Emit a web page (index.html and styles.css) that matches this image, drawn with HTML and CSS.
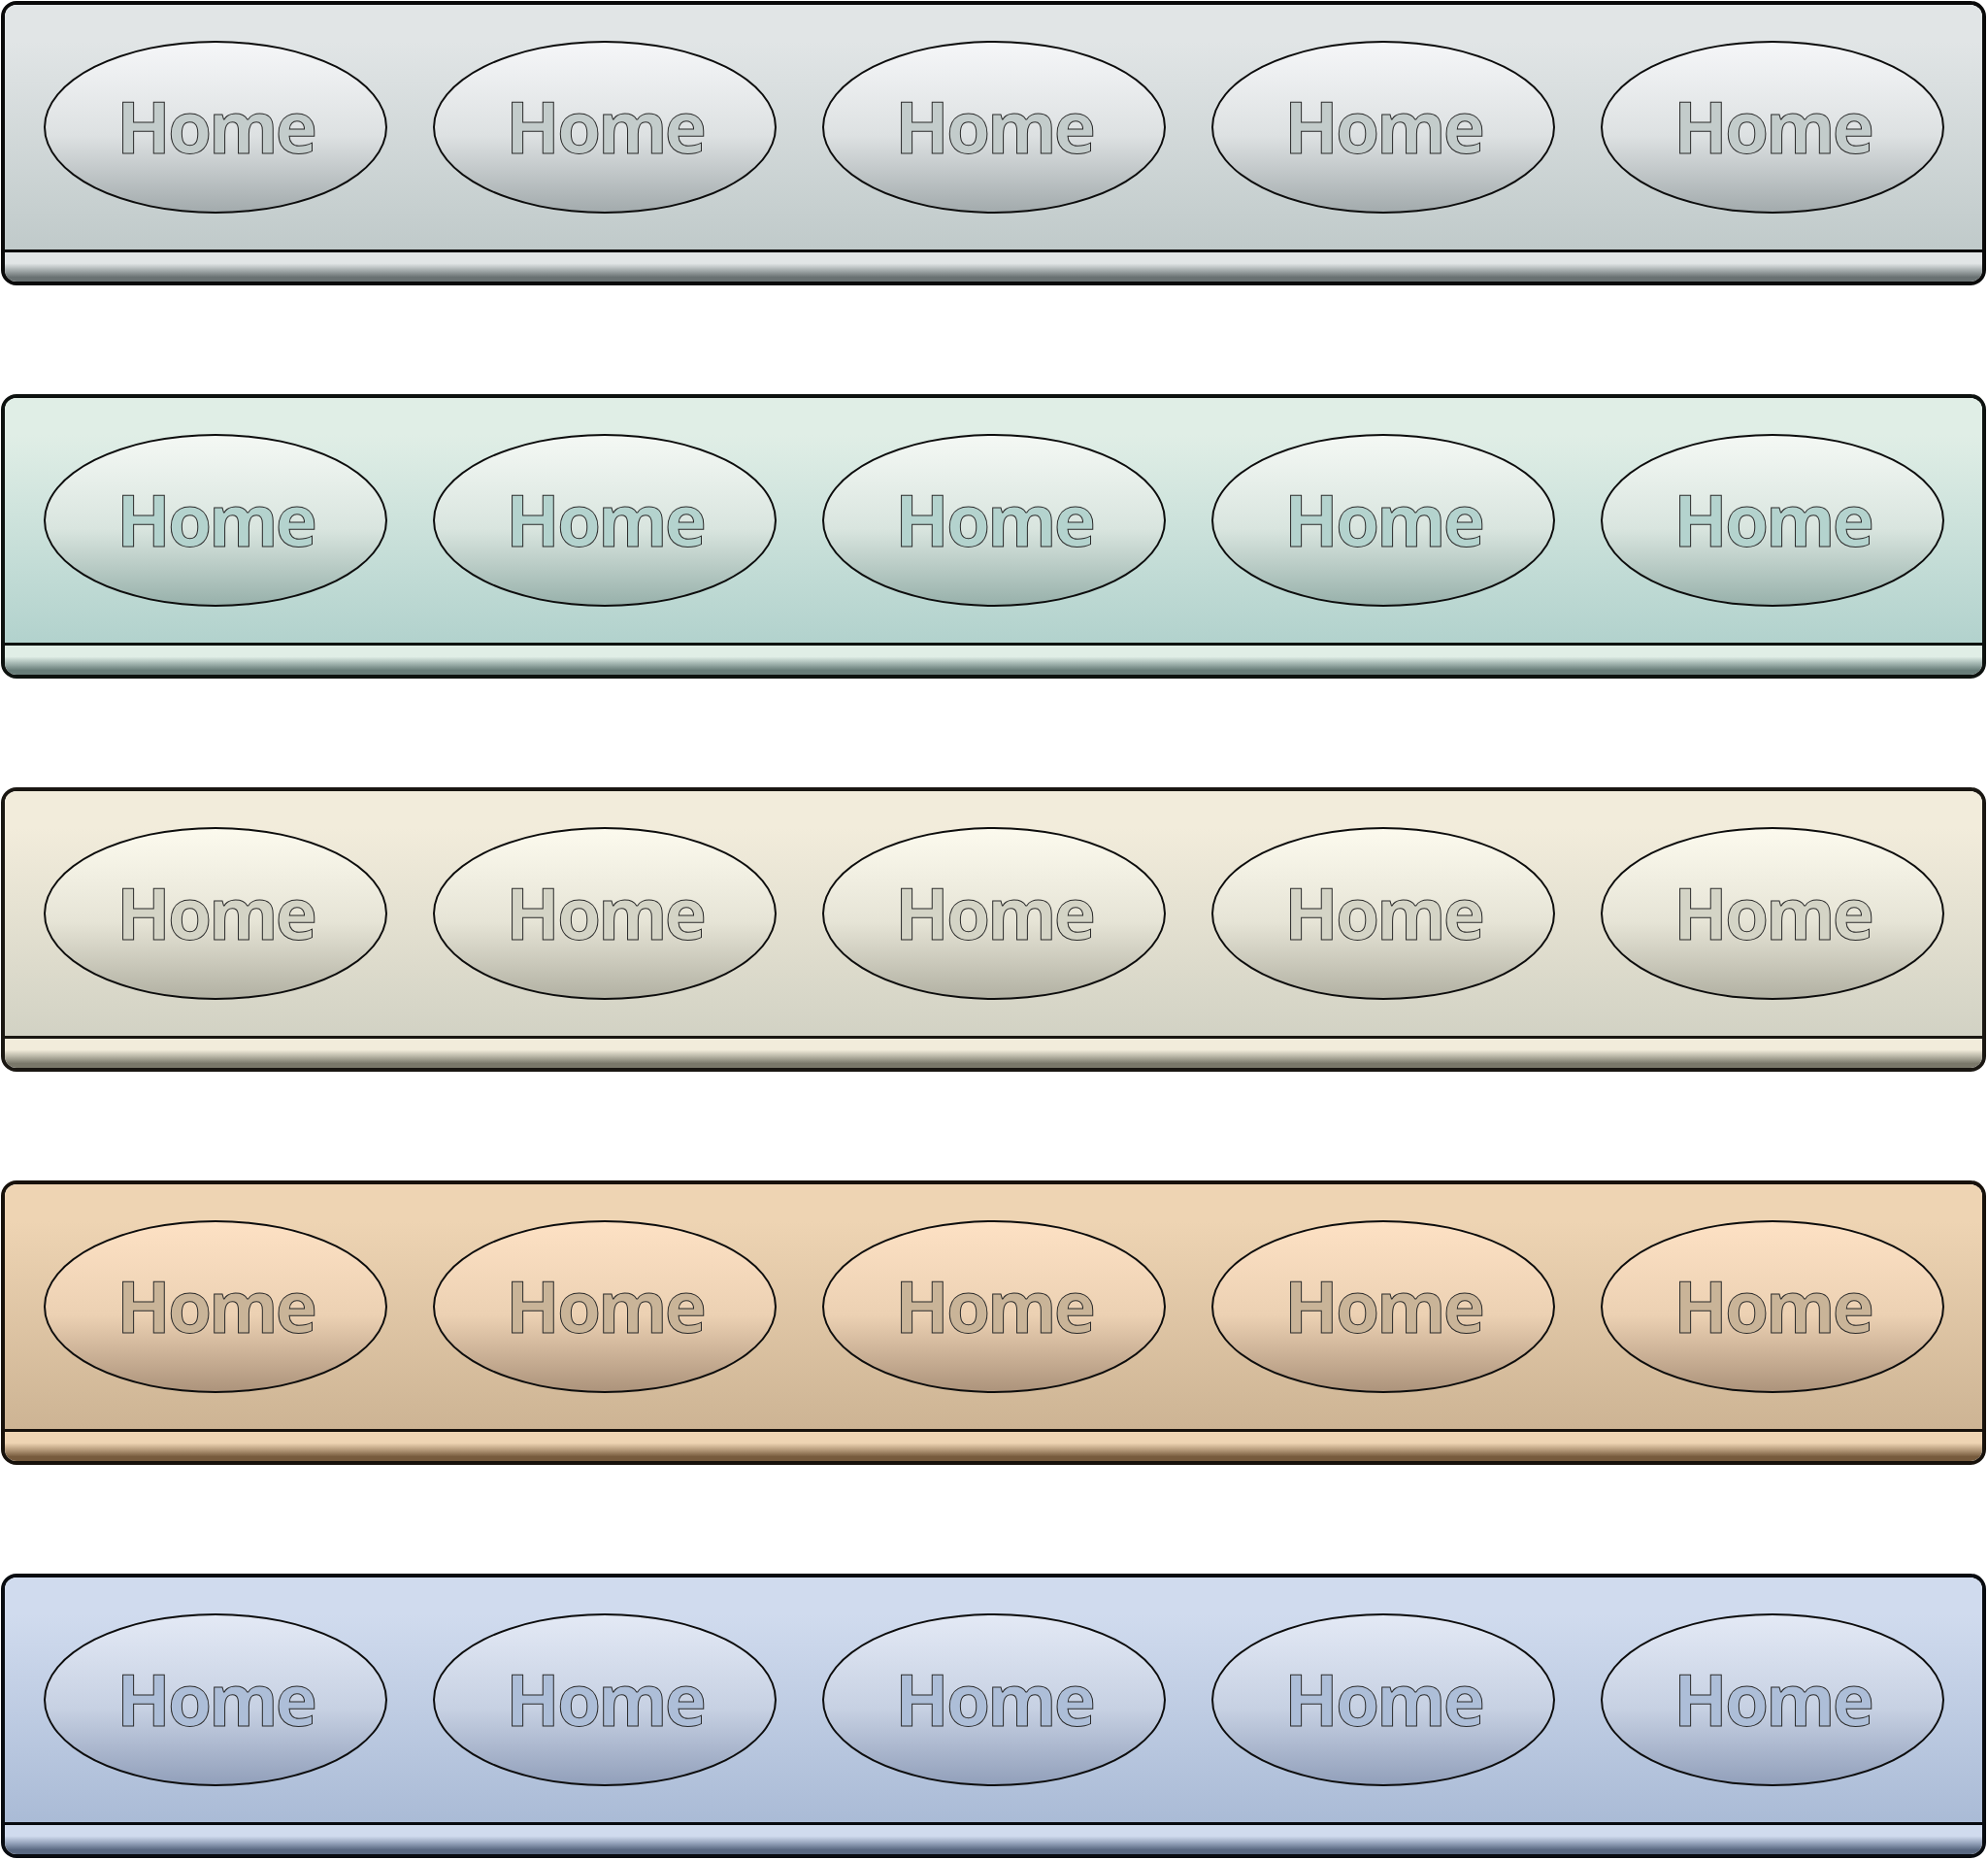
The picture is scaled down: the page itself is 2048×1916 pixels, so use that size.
FILE: index.html
```html
<!DOCTYPE html>
<html lang="en">
<head>
<meta charset="utf-8">
<title>Home navigation bars</title>
<link rel="stylesheet" href="styles.css">
</head>
<body>
<div class="stack">
  <nav class="bar theme-gray">
    <div class="main">
      <a class="pill" href="#">Home</a><a class="pill" href="#">Home</a><a class="pill" href="#">Home</a><a class="pill" href="#">Home</a><a class="pill" href="#">Home</a>
    </div>
    <div class="strip"></div>
  </nav>
  <nav class="bar theme-mint">
    <div class="main">
      <a class="pill" href="#">Home</a><a class="pill" href="#">Home</a><a class="pill" href="#">Home</a><a class="pill" href="#">Home</a><a class="pill" href="#">Home</a>
    </div>
    <div class="strip"></div>
  </nav>
  <nav class="bar theme-cream">
    <div class="main">
      <a class="pill" href="#">Home</a><a class="pill" href="#">Home</a><a class="pill" href="#">Home</a><a class="pill" href="#">Home</a><a class="pill" href="#">Home</a>
    </div>
    <div class="strip"></div>
  </nav>
  <nav class="bar theme-peach">
    <div class="main">
      <a class="pill" href="#">Home</a><a class="pill" href="#">Home</a><a class="pill" href="#">Home</a><a class="pill" href="#">Home</a><a class="pill" href="#">Home</a>
    </div>
    <div class="strip"></div>
  </nav>
  <nav class="bar theme-blue">
    <div class="main">
      <a class="pill" href="#">Home</a><a class="pill" href="#">Home</a><a class="pill" href="#">Home</a><a class="pill" href="#">Home</a><a class="pill" href="#">Home</a>
    </div>
    <div class="strip"></div>
  </nav>
</div>
</body>
</html>
```

FILE: styles.css
```css
html, body {
  margin: 0;
  padding: 0;
  background: #ffffff;
}

body {
  font-family: "Open Sans", "Liberation Sans", sans-serif;
}

.stack {
  display: flex;
  flex-direction: column;
  gap: 112px;
  padding: 1px 2px 0 1px;
}

.bar {
  display: flex;
  flex-direction: column;
  border: 4px solid var(--edge);
  border-radius: 16px;
  overflow: hidden;
  height: 285px;
}

.main {
  height: 252px;
  flex: none;
  display: flex;
  align-items: center;
  gap: 47px;
  padding-left: 40px;
  border-bottom: 3px solid var(--edge);
  background: linear-gradient(180deg, var(--bar-top) 0%, var(--bar-top) 15%, var(--bar-bottom) 100%);
}

.pill {
  box-sizing: border-box;
  width: 354px;
  height: 178px;
  border: 2px solid #0d0d0d;
  border-radius: 50%;
  display: flex;
  align-items: center;
  justify-content: center;
  text-decoration: none;
  font-weight: 700;
  font-size: 73px;
  line-height: 1;
  letter-spacing: -3px;
  padding-bottom: 4px;
  color: var(--text);
  -webkit-text-stroke: 1px #2b2b2b;
  background: linear-gradient(180deg, var(--pill-top) 0%, var(--pill-mid) 55%, var(--pill-bottom) 100%);
}

.strip {
  flex: 1;
  background: linear-gradient(180deg, var(--bar-top) 0%, var(--bar-top) 38%, var(--strip-mid) 62%, var(--strip-dark) 85%, var(--strip-dark) 100%);
}

.theme-gray {
  --edge: #0a0a0a;
  --bar-top: #e1e5e6;
  --bar-bottom: #c0caca;
  --pill-top: #f5f6f8;
  --pill-mid: #dde1e2;
  --pill-bottom: #a3abad;
  --text: #c3cccb;
  --strip-mid: #a4abac;
  --strip-dark: #6a7273;
}

.theme-mint {
  --edge: #0d120f;
  --bar-top: #e0eee6;
  --bar-bottom: #b2d2cd;
  --pill-top: #f4f8f4;
  --pill-mid: #d9e5df;
  --pill-bottom: #98b1ab;
  --text: #b4d3ce;
  --strip-mid: #a2b5b0;
  --strip-dark: #687d79;
}

.theme-cream {
  --edge: #1a1712;
  --bar-top: #f2ecdb;
  --bar-bottom: #d2d2c4;
  --pill-top: #fcfaee;
  --pill-mid: #e6e4d6;
  --pill-bottom: #b2b1a3;
  --text: #d4d4c6;
  --strip-mid: #b5b2a3;
  --strip-dark: #7a786a;
}

.theme-peach {
  --edge: #17110b;
  --bar-top: #eed4b3;
  --bar-bottom: #cdb494;
  --pill-top: #fde1c4;
  --pill-mid: #ecd1b3;
  --pill-bottom: #ad947c;
  --text: #c9b498;
  --strip-mid: #b59a7a;
  --strip-dark: #775b3d;
}

.theme-blue {
  --edge: #080b10;
  --bar-top: #d0dbee;
  --bar-bottom: #aabbd6;
  --pill-top: #e3e9f5;
  --pill-mid: #c7d1e3;
  --pill-bottom: #92a0bb;
  --text: #adbed8;
  --strip-mid: #95a3bb;
  --strip-dark: #5a6982;
}
```
